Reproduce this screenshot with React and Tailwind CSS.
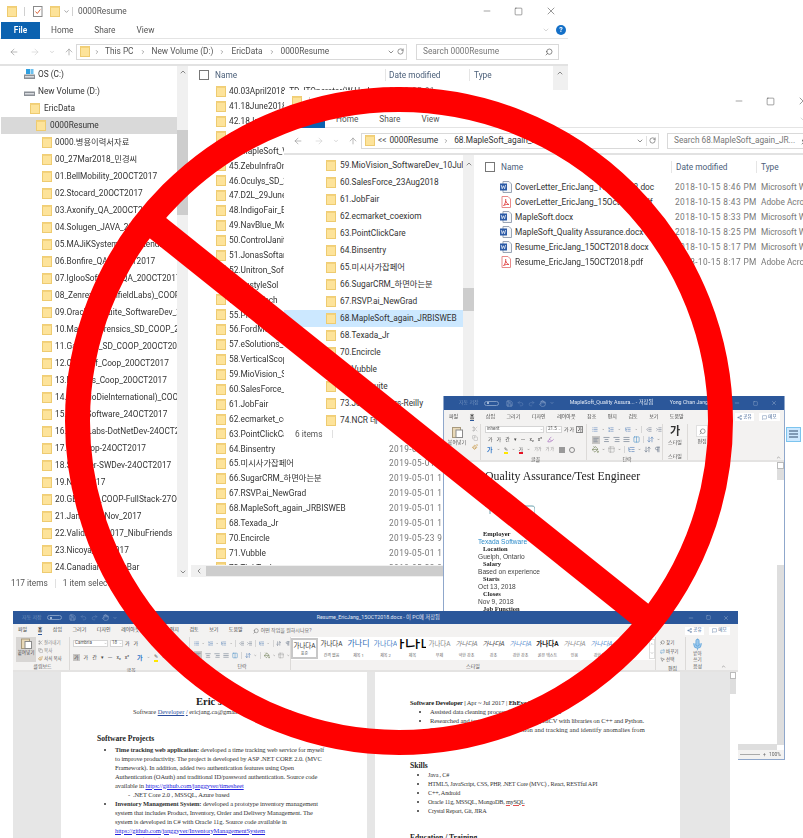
import { ArrowLeft, ArrowRight, ArrowUp, ChevronDown, ChevronUp, ChevronLeft, ChevronRight, RotateCw, Search, Minus, Square, X, Scissors, Copy, Paintbrush, List, ListOrdered, ListTree, AlignLeft, AlignCenter, AlignRight, AlignJustify, Columns2, Indent, Outdent, Pilcrow, ArrowDownUp, Highlighter, Save, Undo2, Redo2, Hand, Share2, MessageSquare, Mic, MousePointer2, Repeat, PaintBucket, Table2 } from 'lucide-react'

const uiFont = "font-['Roboto','Noto_Sans_CJK_KR',sans-serif]"

const navFolders = [
  '0000.병용이력서자료', '00_27Mar2018_민경씨', '01.BellMobility_20OCT2017', '02.Stocard_20OCT2017',
  '03.Axonify_QA_20OCT2017', '04.Solugen_JAVA_20OCT2017', '05.MAJiKSystems_FrontendDev', '06.Bonfire_QA_20OCT2017',
  '07.IglooSoftware_QA_20OCT2017', '08_Zenrez(GreenfieldLabs)_COOP', '09.OracleNetSuite_SoftwareDev_20OCT',
  '10.MagnetForensics_SD_COOP_20OCT2017', '11.GasTank_SD_COOP_20OCT2017', '12.ChefSelf_Coop_20OCT2017',
  '13.Fixtures_Coop_20OCT2017', '14.(OntarioDieInternational)_COOP', '15.WaveSoftware_24OCT2017',
  '16.StackLabs-DotNetDev-24OCT2017', '17.Kik-Coop-24OCT2017', '18.Scanner-SWDev-24OCT2017', '19.NCR_2017',
  '20.GEOTAB_COOP-FullStack-27Oct2017', '21.January_1Nov_2017', '22.ValidicDec2017_NibuFriends',
  '23.Nicoya_Nov2017', '24.CanadianVersusBar',
]

const listFolders = [
  ['40.03April2018_TD_ITOperator(W.Hed', '2019-05-01'], ['41.18June2018_Qlik', '2019-05-01'], ['42.18June2018', '2019-05-01'],
  ['43.Kinaxis', '2019-05-01'], ['44.MapleSoft_V2', '2019-05-01'], ['45.ZebuInfraOne', '2019-05-01'], ['46.Oculys_SD_2018', '2019-05-01'],
  ['47.D2L_29June2018', '2019-05-01'], ['48.IndigoFair_Ecom', '2019-05-01'], ['49.NavBlue_Mobile', '2019-05-01'],
  ['50.ControlJanitor', '2019-05-01'], ['51.JonasSoftare', '2019-05-01'], ['52.Unitron_Software', '2019-05-01'],
  ['53.LustyleSol', '2019-05-01'], ['54.ArrayTech', '2019-05-01'], ['55.PlexTech', '2019-05-01'], ['56.FordMotor', '2019-05-01'],
  ['57.eSolutions_Group', '2019-05-01'], ['58.VerticalScope', '2019-05-01'], ['59.MioVision_SD', '2019-05-01'],
  ['60.SalesForce_23Aug', '2019-05-01'], ['61.JobFair', '2019-05-01'], ['62.ecmarket_coexiom', '2019-05-01'],
  ['63.PointClickCare', '2019-05-01 11:'], ['64.Binsentry', '2019-05-01 11:'], ['65.미시사가잡페어', '2019-05-01 11:'],
  ['66.SugarCRM_하면아는분', '2019-05-01 11:'], ['67.RSVP.ai_NewGrad', '2019-05-01 11:'], ['68.MapleSoft_again_JRBISWEB', '2019-05-01 11:'],
  ['68.Texada_Jr', '2019-05-01 11:'], ['70.Encircle', '2019-05-23 9:1'], ['71.Vubble', '2019-05-01 11:'], ['72.TinkTank', '2019-05-23 9:1'],
]

const sideFolders = [
  '59.MioVision_SoftwareDev_10July2018', '60.SalesForce_23Aug2018', '61.JobFair', '62.ecmarket_coexiom', '63.PointClickCare',
  '64.Binsentry', '65.미시사가잡페어', '66.SugarCRM_하면아는분', '67.RSVP.ai_NewGrad', '68.MapleSoft_again_JRBISWEB',
  '68.Texada_Jr', '70.Encircle', '71.Vubble', '72.Hootsuite', '73.JobsPartners-Reilly', '74.NCR 데',
]

const files = [
  ['word', 'CoverLetter_EricJang_15Oct2018.doc', '2018-10-15 8:46 PM', 'Microsoft W'],
  ['pdf', 'CoverLetter_EricJang_15Oct2018.pdf', '2018-10-15 8:43 PM', 'Adobe Acro'],
  ['word', 'MapleSoft.docx', '2018-10-15 8:33 PM', 'Microsoft W'],
  ['word', 'MapleSoft_Quality Assurance.docx', '2018-10-15 8:25 PM', 'Microsoft W'],
  ['word', 'Resume_EricJang_15OCT2018.docx', '2018-10-15 8:17 PM', 'Microsoft W'],
  ['pdf', 'Resume_EricJang_15OCT2018.pdf', '2018-10-15 8:17 PM', 'Adobe Acro'],
]

const jobFields = [
  ['Employer', 'Texada Software'], ['Location', 'Guelph, Ontario'], ['Salary', 'Based on experience'],
  ['Starts', 'Oct 13, 2018'], ['Closes', 'Nov 9, 2018'], ['Job Function', ''],
]

const wordTabs = ['파일', '홈', '삽입', '그리기', '디자인', '레이아웃', '참조', '편지', '검토', '보기', '도움말']

const styleTiles = [
  ['가나다A', '표준', 'text-[#333]'], ['가나다A', '간격 없음', 'text-[#333]'], ['가나디', '제목 1', 'text-[#2f6eb5] text-[8px]'],
  ['가나다A', '제목 2', 'text-[#4a86c8] text-[7px]'], ['가나다', '제목', 'text-black text-[17px]'], ['가나다A', '부제', 'text-[#888]'],
  ['가나다A', '약한 강조', 'italic text-[#777]'], ['가나다A', '강조', 'italic text-[#444]'], ['가나다A', '강한 강조', 'italic text-[#5b8fd0]'],
  ['가나다A', '굵은 텍스트', 'font-bold text-[#222]'], ['가나다A', '인용', 'italic text-[#888]'], ['가나다A', '강한 인용', 'italic text-[#5b8fd0]'],
]

function Folder() {
  return (
    <svg width="10" height="11" viewBox="0 0 10 11" className="shrink-0">
      <rect x="0.5" y="0.5" width="9" height="10" fill="#fde39a" stroke="#eecb70" />
      <rect x="0.5" y="0.5" width="9" height="1.5" fill="#f3d27c" />
    </svg>
  )
}

function Drive({ os }) {
  return (
    <svg width="11" height="11" viewBox="0 0 11 11" className="shrink-0">
      {os && <rect x="2" y="0" width="4" height="5" fill="#2f9fe0" />}
      {os && <rect x="6.5" y="0" width="3" height="5" fill="#6cc0ee" />}
      <rect x="0" y="5.5" width="11" height="4.5" fill="#8a8f96" />
      <rect x="1" y="7" width="9" height="1.5" fill="#d9dce0" />
    </svg>
  )
}

function DocIcon({ kind }) {
  if (kind === 'pdf') {
    return (
      <svg width="12" height="12" viewBox="0 0 12 12" className="shrink-0">
        <path d="M2 .5h6l2.5 2.5v8.500h-8.500z" fill="#fff" stroke="#e88a8a" />
        <path d="M3.500 9.500c1.500-1 2.500-4 2.200-6.500M3.500 9.500c2-1 4.500-1.500 5.500-1M5.700 5c.5 1.500 1.500 2.800 3 3.500" fill="none" stroke="#e03b3b" strokeWidth="0.9" />
      </svg>
    )
  }
  return (
    <svg width="12" height="12" viewBox="0 0 12 12" className="shrink-0">
      <path d="M3 .5h6l2.500 2.500v8.500h-8.500z" fill="#f4f6f9" stroke="#9aa5b5" />
      <rect x="0" y="2.500" width="7" height="7" fill="#2b5aa6" />
      <path d="M1.200 4l1 3.800 1.200-3 1.200 3 1-3.800" fill="none" stroke="#fff" strokeWidth="0.7" />
    </svg>
  )
}

function WinControls({ wide }) {
  return (
    <div className={`ml-auto flex items-center gap-[22px] ${wide ? 'pr-[5px]' : ''}`}>
      <Minus size={10} strokeWidth={1.2} color="#444" />
      <Square size={9} strokeWidth={1.2} color="#333" />
      <X size={12} strokeWidth={1} color="#333" />
    </div>
  )
}

function AddressNav() {
  return (
    <div className="flex items-center gap-[9px] text-[#8a8a8a]">
      <ArrowLeft size={10} strokeWidth={1.4} />
      <ArrowRight size={10} strokeWidth={1.4} className="ml-[2px] text-[#ccc]" />
      <ChevronDown size={6} strokeWidth={1.4} />
      <ArrowUp size={10} strokeWidth={1.4} />
    </div>
  )
}

function ExplorerA() {
  return (
    <div className={`absolute left-0 top-0 h-[590px] w-[568px] bg-white text-[8.300px] text-[#333] blur-[0.4px] ${uiFont}`}>
      <div className="flex h-[22px] items-center pl-[7px] pr-[11px]">
        <Folder />
        <div className="ml-[7px] mr-[8px] h-[9px] w-px bg-[#d0d0d0]" />
        <svg width="10" height="11" viewBox="0 0 10 11"><rect x="0.5" y="0.5" width="8.500" height="10" fill="#fff" stroke="#8a8a8a" /><path d="M2.500 5.500l1.800 2 3-4" fill="none" stroke="#d9643a" strokeWidth="1" /></svg>
        <div className="ml-[7px]"><Folder /></div>
        <ChevronDown size={7} strokeWidth={1.6} className="ml-[3px] text-[#444]" />
        <div className="ml-[2px] h-[9px] w-px bg-[#d0d0d0]" />
        <span className="ml-[5px] text-[#555]">0000Resume</span>
        <WinControls />
      </div>
      <div className="flex h-[17px] items-center border-b border-[#e4e4e4]">
        <div className="ml-px flex h-[17px] w-[39px] items-center justify-center bg-[#0b62b0] font-semibold text-white">File</div>
        <span className="ml-[11px] text-[#555]">Home</span>
        <span className="ml-[21px] text-[#555]">Share</span>
        <span className="ml-[21px] text-[#555]">View</span>
        <ChevronDown size={8} strokeWidth={1.2} className="ml-auto text-[#999]" />
        <div className="ml-[6px] mr-[2px] flex h-[10px] w-[10px] items-center justify-center rounded-full bg-[#1470c8] text-[7px] font-bold text-white">?</div>
      </div>
      <div className="flex h-[27px] items-center border-b-2 border-[#e2e2e2] pl-[9px]">
        <AddressNav />
        <div className="ml-[2px] flex h-[16px] w-[331px] items-center border border-[#d9d9d9] pl-[3px] text-[#555]">
          <Folder />
          <ChevronRight size={6} className="ml-[4px]" />
          <span className="ml-[5px]">This PC</span>
          <ChevronRight size={6} className="ml-[6px]" />
          <span className="ml-[6px]">New Volume (D:)</span>
          <ChevronRight size={6} className="ml-[6px]" />
          <span className="ml-[6px]">EricData</span>
          <ChevronRight size={6} className="ml-[6px]" />
          <span className="ml-[6px]">0000Resume</span>
          <ChevronDown size={8} className="ml-auto mr-[2px]" />
          <RotateCw size={7} className="mr-[2px]" />
        </div>
        <div className="ml-[9px] flex h-[16px] w-[143px] items-center justify-between border border-[#d9d9d9] pl-[6px] pr-[5px] text-[#777]">
          <span>Search 0000Resume</span>
          <Search size={8} className="scale-x-[-1] text-[#555]" />
        </div>
      </div>
      <div className="flex h-[511px]">
        <div className="flex w-[177px] flex-col overflow-hidden whitespace-nowrap">
          <div className="flex h-[17px] shrink-0 items-center gap-[3px] pl-[24px]"><Drive os /><span>OS (C:)</span></div>
          <div className="flex h-[17px] shrink-0 items-center gap-[3px] pl-[24px]"><Drive /><span>New Volume (D:)</span></div>
          <div className="flex h-[17px] shrink-0 items-center gap-[4px] pl-[30px]"><Folder /><span>EricData</span></div>
          <div className="ml-px flex h-[17px] shrink-0 items-center gap-[4px] bg-[#d9d9d9] pl-[35px]"><Folder /><span>0000Resume</span></div>
          {navFolders.map((name) => (
            <div key={name} className="flex h-[17px] shrink-0 items-center gap-[3px] pl-[42px]"><Folder /><span>{name}</span></div>
          ))}
        </div>
        <div className="flex w-[11px] flex-col bg-[#f0f0f0] text-[#555]">
          <ChevronUp size={8} strokeWidth={2} className="ml-[2px] mt-[2px]" />
          <div className="mt-[54px] h-[85px] bg-[#cdcdcd]" />
          <ChevronDown size={8} strokeWidth={2} className="mb-[1px] ml-[2px] mt-auto" />
        </div>
        <div className="flex w-[380px] flex-col pl-[3px]">
          <div className="flex min-h-0 flex-1">
            <div className="flex w-[362px] flex-col">
              <div className="flex h-[18px] shrink-0 items-center pl-[8px] text-[#4c607a]">
                <div className="h-[10px] w-[10px] border border-[#777]" />
                <span className="ml-[6px] w-[170px]">Name</span>
                <span className="w-[84px] border-l border-[#e5e5e5] pl-[3px]">Date modified</span>
                <span className="border-l border-[#e5e5e5] pl-[4px]">Type</span>
              </div>
              <div className="overflow-hidden whitespace-nowrap">
                {listFolders.map(([name, date]) => (
                  <div key={name} className="flex h-[14.9px] items-center pl-[25px]">
                    <Folder />
                    <span className="ml-[3px] w-[160px] shrink-0">{name}</span>
                    <span className="tracking-[0.4px] text-[#777]">{date}</span>
                  </div>
                ))}
              </div>
            </div>
            <div className="w-[15px] bg-[#f0f0f0] pl-[3px] pt-[3px]"><ChevronUp size={8} strokeWidth={2} className="text-[#555]" /></div>
          </div>
          <div className="flex h-[12px] shrink-0 items-center bg-[#f0f0f0] pl-[4px]">
            <ChevronLeft size={8} strokeWidth={2} className="text-[#555]" />
            <div className="ml-[3px] h-[10px] w-[300px] bg-[#cdcdcd]" />
          </div>
        </div>
      </div>
      <div className="flex h-[13px] items-center pl-[11px] text-[#555]">
        <span>117 items</span>
        <div className="mx-[7px] h-[9px] w-px bg-[#e0e0e0]" />
        <span>1 item selected</span>
      </div>
    </div>
  )
}

function ExplorerB() {
  return (
    <div className={`absolute left-[284px] top-[90px] h-[351px] w-[530px] bg-white text-[8.300px] text-[#333] blur-[0.4px] ${uiFont}`}>
      <div className="flex h-[21px] items-center pl-[8px] pt-[1px]">
        <Folder />
        <div className="ml-[7px] h-[9px] w-px bg-[#d0d0d0]" />
        <div className="ml-[7px] h-[8px] w-[8px] bg-[#e8e8e8]" />
        <WinControls wide />
      </div>
      <div className="flex h-[17px] items-center border-b border-[#e4e4e4]">
        <div className="flex h-[17px] w-[41px] items-center justify-center bg-[#0b62b0] font-semibold text-white">File</div>
        <span className="ml-[11px] text-[#555]">Home</span>
        <span className="ml-[21px] text-[#555]">Share</span>
        <span className="ml-[21px] text-[#555]">View</span>
        <ChevronDown size={8} strokeWidth={1.2} className="ml-[360px] text-[#999]" />
      </div>
      <div className="flex h-[27px] items-center border-b-2 border-[#e2e2e2] pl-[9px]">
        <AddressNav />
        <div className="ml-[3px] flex h-[16px] w-[298px] items-center border border-[#d9d9d9] pl-[3px] text-[#555]">
          <Folder />
          <span className="ml-[3px]">&lt;&lt;</span>
          <span className="ml-[3px] text-[#333]">0000Resume</span>
          <ChevronRight size={6} className="ml-[5px]" />
          <span className="ml-[5px] text-[#333]">68.MapleSoft_again_JRBISWEB</span>
          <ChevronDown size={8} className="ml-auto" />
          <div className="mx-[2px] h-[10px] w-px bg-[#e0e0e0]" />
          <RotateCw size={7} className="mr-[2px]" />
        </div>
        <div className="ml-[8px] flex h-[16px] w-[145px] items-center justify-between whitespace-nowrap border border-[#d9d9d9] pl-[6px] pr-[2px] text-[#777]">
          <span>Search 68.MapleSoft_again_JR...</span>
          <Search size={8} className="scale-x-[-1] text-[#555]" />
        </div>
      </div>
      <div className="flex h-[272px]">
        <div className="flex w-[179px] flex-col overflow-hidden whitespace-nowrap pt-[2px]">
          {sideFolders.map((name) => (
            <div key={name} className={`flex h-[17px] shrink-0 items-center gap-[4px] pl-[42px] ${name.startsWith('68.Maple') ? 'bg-[#cce8ff]' : ''}`}><Folder /><span>{name}</span></div>
          ))}
        </div>
        <div className="flex w-[11px] flex-col bg-[#f0f0f0] text-[#555]">
          <ChevronUp size={8} strokeWidth={2} className="ml-[2px] mt-[5px]" />
          <div className="mt-[120px] h-[23px] bg-[#cdcdcd]" />
        </div>
        <div className="flex flex-1 flex-col pl-[11px]">
          <div className="flex h-[23.500px] items-center text-[#4c607a]">
            <div className="h-[10px] w-[10px] border border-[#777]" />
            <span className="ml-[6px] w-[170px]">Name</span>
            <span className="w-[85px] border-l border-[#e5e5e5] pl-[4px]">Date modified</span>
            <span className="border-l border-[#e5e5e5] pl-[4px]">Type</span>
          </div>
          <div className="pt-[1px]">
            {files.map(([kind, name, date, type]) => (
              <div key={name} className="flex h-[15px] items-center whitespace-nowrap pl-[15px]">
                <DocIcon kind={kind} />
                <span className="ml-[3px] w-[160px] shrink-0">{name}</span>
                <span className="w-[86px] shrink-0 tracking-[0.4px] text-[#777]">{date}</span>
                <span className="text-[#777]">{type}</span>
              </div>
            ))}
          </div>
        </div>
      </div>
      <div className="flex h-[14px] items-center pl-[11px] text-[#555]">
        <span>6 items</span>
        <div className="ml-[10px] h-[8px] w-px bg-[#e0e0e0]" />
        <div className="ml-[453px] flex h-[15px] w-[15px] flex-col justify-center gap-[1px] border border-[#7cc4ee] bg-[#cce8ff] px-[2px]">
          <div className="h-[2px] bg-[#7f9ab5]" />
          <div className="h-[2px] bg-[#7f9ab5]" />
          <div className="h-[2px] bg-[#7f9ab5]" />
        </div>
      </div>
    </div>
  )
}

function QuickAccess() {
  return (
    <div className="flex items-center gap-[4px] whitespace-nowrap text-[#c5d4e8]">
      <span className="text-[5px] text-[#6f8fbd]">자동 저장</span>
      <div className="ml-[1px] flex h-[5px] w-[15px] items-center rounded-full border border-[#7d9ac4] pl-[2px]"><div className="h-[2px] w-[2px] rounded-full bg-[#c5d4e8]" /></div>
      <Save size={7} strokeWidth={1.2} className="ml-[3px]" />
      <Undo2 size={7} strokeWidth={1.2} className="text-[#7d9ac4]" />
      <Redo2 size={7} strokeWidth={1.2} className="text-[#7d9ac4]" />
      <Hand size={7} strokeWidth={1.2} />
      <ChevronDown size={4} />
    </div>
  )
}

function WordControls({ gap }) {
  return (
    <div className={`flex items-center text-[#dfe7f3] ${gap}`}>
      <Minus size={6} strokeWidth={1.2} />
      <Square size={5} strokeWidth={1.2} />
      <X size={6} strokeWidth={1.2} />
    </div>
  )
}

function SharePair() {
  return (
    <div className="ml-auto flex items-center gap-[5px]">
      <div className="flex h-[8px] w-[19px] items-center justify-center gap-px bg-white text-[#4a6a9a]"><Share2 size={5} /><span className="text-[4.500px]">공유</span></div>
      <div className="flex h-[8px] w-[21px] items-center justify-center gap-px bg-white text-[#4a6a9a]"><MessageSquare size={5} /><span className="text-[4.500px]">메모</span></div>
    </div>
  )
}

function Letters({ items, gap = 'gap-[4px]' }) {
  return (
    <div className={`flex items-center ${gap} text-[5px] text-[#444]`}>
      {items.map((item, i) => <span key={i}>{item}</span>)}
    </div>
  )
}

function Sep() {
  return <div className="h-[7px] w-px bg-[#d5d5d5]" />
}

function ParaRows() {
  const c = '#5b6b80'
  return (
    <>
      <div className="flex h-[7px] items-center gap-[4px]">
        <List size={7} color="#4a78b5" /><ChevronDown size={3} /><ListOrdered size={7} color="#4a78b5" /><ChevronDown size={3} /><ListTree size={7} color="#4a78b5" /><ChevronDown size={3} />
        <Sep /><Outdent size={7} color={c} /><Indent size={7} color={c} />
      </div>
      <div className="flex h-[7px] items-center gap-[3px]">
        <div className="bg-[#c8c6c4] p-px"><AlignLeft size={6} color={c} /></div>
        <AlignCenter size={7} color={c} /><AlignRight size={7} color={c} /><AlignJustify size={7} color={c} /><Columns2 size={7} color="#4a90c8" />
        <Sep /><ArrowDownUp size={7} color="#4a78b5" /><ChevronDown size={3} />
      </div>
      <div className="flex h-[7px] items-center gap-[3px]">
        <PaintBucket size={7} color="#6a7a50" /><ChevronDown size={3} /><Table2 size={7} color="#aaa" /><ChevronDown size={3} />
        <Sep /><ListTree size={7} color="#4a78b5" /><ChevronDown size={3} /><ArrowDownUp size={7} color={c} /><Pilcrow size={7} color={c} />
      </div>
    </>
  )
}

function ParaRowsWide() {
  const c = '#5b6b80'
  return (
    <>
      <div className="flex h-[8px] items-center gap-[3px]">
        <List size={7} color="#4a78b5" /><ChevronDown size={3} /><ListOrdered size={7} color="#4a78b5" /><ChevronDown size={3} /><ListTree size={7} color="#4a78b5" /><ChevronDown size={3} />
        <Sep /><Outdent size={7} color={c} /><Indent size={7} color={c} /><Sep /><ListTree size={7} color="#4a78b5" /><ChevronDown size={3} /><Sep /><ArrowDownUp size={7} color={c} /><Pilcrow size={7} color={c} />
      </div>
      <div className="flex h-[8px] items-center gap-[3px]">
        <div className="bg-[#c8c6c4] p-px"><AlignLeft size={6} color={c} /></div>
        <AlignCenter size={7} color={c} /><AlignRight size={7} color={c} /><AlignJustify size={7} color={c} /><Columns2 size={7} color="#4a90c8" />
        <Sep /><ArrowDownUp size={7} color="#4a78b5" /><ChevronDown size={3} /><Sep /><PaintBucket size={7} color="#6a7a50" /><ChevronDown size={3} /><Table2 size={7} color="#aaa" /><ChevronDown size={3} />
      </div>
    </>
  )
}

function GroupLabel({ children }) {
  return <div className="mt-auto pb-[1px] text-center text-[5px] leading-[6px] text-[#555]">{children}</div>
}

function WordQuality() {
  return (
    <div className={`absolute left-[443px] top-[396px] flex h-[364px] w-[342px] flex-col border-x border-b border-[#8fa7cb] bg-white ${uiFont} blur-[0.4px]`}>
      <div className="flex h-[14px] shrink-0 items-center whitespace-nowrap bg-[#2b579a] pl-[15px] pr-[7px] text-[5.300px] text-[#e3eaf5]">
        <QuickAccess />
        <span className="ml-[16px] w-[100px]">MapleSoft_Quality Assura... - 저장됨</span>
        <span>Yong Chan Jang</span>
        <div className="ml-auto"><WordControls gap="gap-[13px]" /></div>
      </div>
      <div className="flex h-[14px] shrink-0 items-center bg-[#f3f2f1] pl-[5px] pr-[4px] text-[5px] text-[#444]">
        <div className="flex gap-[11.500px]">
          {wordTabs.map((t) => (
            <span key={t} className={t === '홈' ? 'border-b border-[#2b579a] font-semibold' : ''}>{t}</span>
          ))}
        </div>
        <SharePair />
      </div>
      <div className="flex h-[38px] shrink-0 border-b-2 border-[#e4e3e2] bg-[#f3f2f1]">
        <div className="flex w-[37px] shrink-0 flex-col border-r border-[#dcdad8]">
          <div className="flex">
            <div className="flex w-[26px] flex-col items-center pt-[2px]">
              <svg width="11" height="12" viewBox="0 0 11 12"><rect x="0.5" y="1.500" width="8" height="10" fill="#e9d9b8" stroke="#a8997c" /><rect x="4" y="4" width="6.500" height="7.500" fill="#fff" stroke="#8a8a8a" /></svg>
              <span className="text-[5px] leading-[8px] text-[#555]">붙여넣기</span>
            </div>
            <div className="flex flex-col gap-[3px] pl-[2px] pt-[2px]">
              <Scissors size={6} color="#aaa" /><Copy size={6} color="#aaa" /><Paintbrush size={6} color="#c08a2e" />
            </div>
          </div>
        </div>
        <div className="flex w-[106px] shrink-0 flex-col gap-[3px] border-r border-[#dcdad8] pl-[4px] pt-[2px]">
          <div className="flex h-[7px] items-center gap-[2px]">
            <div className="flex h-[7px] w-[59px] items-center justify-between border border-[#d5d5d5] bg-white pl-px text-[4.500px] text-[#555]">inherit<ChevronDown size={3} /></div>
            <div className="flex h-[7px] w-[16px] items-center justify-between border border-[#d5d5d5] bg-white pl-px text-[4.500px] text-[#555]">21.5<ChevronDown size={3} /></div>
            <Letters items={['가', '가']} gap="gap-px" />
            <div className="h-[7px] w-[7px] border border-[#888] text-center text-[4.500px] leading-[6px]">가</div>
          </div>
          <div className="flex h-[7px] items-center pl-[3px]"><Letters items={['가', '가', '간', '▾', 'ㅡ', 'x₂', 'x²']} gap="gap-[4px]" /><Highlighter size={7} color="#9b59b6" className="ml-[5px]" /></div>
          <div className="flex h-[7px] items-center gap-[4px] pl-[2px] text-[6px] font-bold">
            <span className="text-[#2e75c8]">가</span><ChevronDown size={3} />
            <span className="border-b-2 border-[#ffe600] text-[5px] font-normal leading-[6px] text-[#555]">✎</span><ChevronDown size={3} />
            <span className="border-b-2 border-[#e81123] text-[5px] font-normal leading-[6px] text-[#555]">가</span><ChevronDown size={3} />
            <span className="text-[4px] font-normal text-[#888]">가가</span>
            <span className="text-[4px] font-normal text-[#888]">가 가</span>
            <div className="ml-[1px] h-[6px] w-[6px] bg-[#999]" />
            <div className="h-[6px] w-[6px] rounded-full border border-[#888]" />
          </div>
          <GroupLabel>글꼴</GroupLabel>
        </div>
        <div className="flex w-[76px] shrink-0 flex-col gap-[3px] border-r border-[#dcdad8] pl-[5px] pt-[2px]">
          <ParaRows />
          <GroupLabel>단락</GroupLabel>
        </div>
        <div className="flex w-[25px] shrink-0 flex-col items-center border-r border-[#dcdad8] pt-[2px]">
          <span className="text-[11px] font-bold leading-[12px] text-[#333]">가</span>
          <span className="text-[5px] leading-[8px] text-[#555]">스타일</span>
          <GroupLabel>스타일</GroupLabel>
        </div>
        <div className="flex w-[28px] shrink-0 flex-col items-center pt-[1px]">
          <div className="flex h-[12px] w-[12px] items-center justify-center border border-[#e0e0e0] bg-white"><Search size={7} className="scale-x-[-1]" color="#666" /></div>
          <span className="text-[5px] leading-[9px] text-[#555]">편집</span>
        </div>
        <ChevronUp size={5} className="ml-auto mr-[3px] mt-auto text-[#555]" />
      </div>
      <div className="flex min-h-0 flex-1">
        <div className="flex-1 overflow-hidden pl-[41px] pt-[6px] font-['Liberation_Serif',serif] text-[#222]">
          <div className="text-[11.800px] leading-[16px]">Quality Assurance/Test Engineer</div>
          <svg width="50" height="9" viewBox="0 0 50 9" className="mt-[21px] block"><path d="M0 1h12M5 1v8M38 8V1h9c2 0 3 1 3 3v5" fill="none" stroke="#6aa0ad" strokeWidth="1" /></svg>
          <div className="-ml-[7px] mt-[16px] leading-[7.500px]">
            {jobFields.map(([label, value]) => (
              <div key={label}>
                <div className="pl-[5px] text-[6.500px] font-bold">{label}</div>
                {value && (
                  <div className={`font-['Liberation_Sans',sans-serif] text-[6.600px] ${label === 'Employer' ? 'text-[#2d8bc9]' : 'text-[#444]'}`}>{value}</div>
                )}
              </div>
            ))}
          </div>
        </div>
        <div className="flex w-[7px] shrink-0 flex-col bg-[#dedede]">
          <div className="h-[7px] border border-[#bbb] bg-white" />
          <div className="mt-[11px] h-[85px] bg-white" />
        </div>
      </div>
      <div className="flex h-[6px] shrink-0 items-center justify-end bg-[#dedede]">
        <div className="h-[5px] w-[7px] bg-white" />
      </div>
      <div className="flex h-[9px] shrink-0 items-center justify-end gap-[3px] bg-[#f3f2f1] pr-[3px] text-[5px] text-[#666]">
        <div className="h-px w-[20px] bg-[#aaa]" /><span>+</span><span>100%</span>
      </div>
    </div>
  )
}

function ResumeLeftPage() {
  return (
    <div className="ml-[48px] w-[306px] shrink-0 overflow-hidden whitespace-nowrap bg-white pl-[36px] text-[6.500px] leading-[9px] tracking-[-0.1px]">
      <div className="mt-[24px] pl-[99px] text-[10.500px] font-bold leading-[12px] tracking-normal text-[#222]">Eric Jang</div>
      <div className="pl-[36px] text-[6.400px] leading-[8px] tracking-normal">Software <span className="text-[#2a4c9c] underline">Developer</span> <span className="text-[#2a4c9c] underline">/</span> ericjang.ca@gmail.com / 519-555-0123</div>
      <div className="mt-[18px] text-[7.600px] font-bold leading-[10px] tracking-normal text-[#222]">Software Projects</div>
      <ul className="list-disc pl-[18px] pt-[0.500px]">
        <li><b>Time tracking web application:</b> developed a time tracking web service for myself</li>
        <li className="list-none">to improve productivity. The project is developed by ASP .NET CORE 2.0. (MVC</li>
        <li className="list-none">Framework). In addition, added two authentication features using Open</li>
        <li className="list-none">Authentication (OAuth) and traditional ID/password authentication. Source code</li>
        <li className="list-none">available in <span className="text-[#2222dd] underline">https://github.com/janggyver/timesheet</span></li>
        <li className="ml-[18px] list-['-__']">.NET Core 2.0 , MSSQL, Azure based</li>
        <li><b>Inventory Management System:</b> developed a prototype inventory management</li>
        <li className="list-none">system that includes Product, Inventory, Order and Delivery Management. The</li>
        <li className="list-none">system is developed in C# with Oracle 11g. Source code available in</li>
        <li className="list-none"><span className="text-[#2222dd] underline">https://github.com/janggyver/InventoryManagementSystem</span></li>
        <li className="ml-[18px] list-['-__']">C# (MVC), JavaScript, Oracle 11g based</li>
      </ul>
    </div>
  )
}

function ResumeRightPage() {
  return (
    <div className="ml-[8px] w-[305px] shrink-0 overflow-hidden whitespace-nowrap bg-white pl-[35px] text-[6.500px] leading-[9px] tracking-[-0.1px]">
      <div className="mt-[25.500px]"><b className="text-[#222]">Software Developer |</b> Apr ~ Jul 2017 | <b className="text-[#222]">EhEye Inc</b></div>
      <ul className="list-disc pl-[20px]">
        <li>Assisted data cleaning process for the ML algorithm</li>
        <li>Researched and tested object detection in OpenCV with libraries on C++ and Python.</li>
        <li className="list-none tracking-[0.07px]">The system performs motion detection and tracking and identify anomalies from</li>
      </ul>
      <div className="mt-[27px] text-[7.600px] font-bold leading-[9px] tracking-normal text-[#222]">Skills</div>
      <ul className="list-disc pl-[18px] text-[6.200px] tracking-[-0.2px]">
        <li>Java , C#</li>
        <li>HTML5, JavaScript, CSS, PHP, .NET Core (MVC) , React, RESTful API</li>
        <li>C++, Android</li>
        <li>Oracle 11g, MSSQL, MongoDB, <span className="underline decoration-[#e05050]">mySQL</span></li>
        <li>Crystal Report, Git, JIRA</li>
      </ul>
      <div className="mt-[18px] text-[7.600px] font-bold leading-[9px] tracking-normal text-[#222]">Education / Training</div>
    </div>
  )
}

function WordResume() {
  return (
    <div className={`absolute left-[13px] top-[611px] flex h-[227px] w-[725px] flex-col bg-white ${uiFont} blur-[0.4px]`}>
      <div className="flex h-[13px] shrink-0 items-center whitespace-nowrap bg-[#2b579a] px-[9px] text-[5.300px] text-[#e3eaf5]">
        <QuickAccess />
        <span className="ml-[200px]">Resume_EricJang_15OCT2018.docx - 이 PC에 저장됨</span>
        <div className="ml-auto"><WordControls gap="gap-[12px]" /></div>
      </div>
      <div className="flex h-[13px] shrink-0 items-center bg-[#f3f2f1] pl-[5px] pr-[8px] text-[5px] text-[#444]">
        <div className="flex gap-[10.500px]">
          {wordTabs.map((t) => (
            <span key={t} className={t === '홈' ? 'border-b border-[#2b579a] font-semibold' : ''}>{t}</span>
          ))}
        </div>
        <Search size={6} className="ml-[10px] scale-x-[-1]" color="#666" />
        <span className="ml-[2px] text-[#666]">어떤 작업을 원하시나요?</span>
        <SharePair />
      </div>
      <div className="flex h-[35px] shrink-0 border-b-2 border-[#e4e3e2] bg-[#f3f2f1]">
        <div className="flex w-[57px] shrink-0 flex-col border-r border-[#dcdad8] pl-[3px]">
          <div className="flex">
            <div className="flex h-[25px] w-[20px] flex-col items-center bg-[#d8d6d4] pt-[1px]">
              <svg width="11" height="11" viewBox="0 0 11 11"><rect x="0.5" y="1" width="8" height="9.500" fill="#e9d9b8" stroke="#a8997c" /><rect x="4" y="3.500" width="6.500" height="7" fill="#fff" stroke="#8a8a8a" /></svg>
              <span className="text-[4.500px] leading-[7px] text-[#444]">붙여넣기</span>
            </div>
            <div className="flex flex-col gap-[1px] pl-[2px] pt-[2px] text-[4.500px] leading-[7px] text-[#888]">
              <div className="flex items-center gap-px"><Scissors size={5} />잘라내기</div>
              <div className="flex items-center gap-px"><Copy size={5} />복사</div>
              <div className="flex items-center gap-px text-[#555]"><Paintbrush size={5} color="#c08a2e" />서식 복사</div>
            </div>
          </div>
          <GroupLabel>클립보드</GroupLabel>
        </div>
        <div className="flex w-[120px] shrink-0 flex-col gap-[5px] border-r border-[#dcdad8] pl-[3px] pt-[3px]">
          <div className="flex items-center gap-[2px]">
            <div className="flex h-[7px] w-[35px] items-center justify-between border border-[#d5d5d5] bg-white pl-px text-[4.500px] text-[#555]">Cambria<ChevronDown size={3} /></div>
            <div className="flex h-[7px] w-[13px] items-center justify-between border border-[#d5d5d5] bg-white pl-px text-[4.500px] text-[#555]">18<ChevronDown size={3} /></div>
            <Letters items={['가', '가']} />
          </div>
          <div className="flex items-center gap-[4px] text-[5px] text-[#444]">
            <span className="bg-[#c8c6c4] px-px">가</span><span>가</span><span>간</span><span>▾</span><span>ㅡ</span><span>x₂</span><span>x²</span>
            <span className="ml-[4px] text-[6px] font-bold text-[#2e75c8]">가</span><ChevronDown size={3} />
            <span className="border-b-2 border-[#ffe600] text-[#555]">✎</span><ChevronDown size={3} />
          </div>
          <GroupLabel>글꼴</GroupLabel>
        </div>
        <div className="flex w-[101px] shrink-0 flex-col gap-[4px] border-r border-[#dcdad8] pl-[4px] pt-[3px]">
          <ParaRowsWide />
          <GroupLabel>단락</GroupLabel>
        </div>
        <div className="flex w-[365px] shrink-0 flex-col border-r border-[#dcdad8]">
          <div className="flex h-[23px] items-center bg-white">
            {styleTiles.map(([sample, label, tone], i) => (
              <div key={label} className={`flex h-[21px] w-[27px] shrink-0 flex-col items-center justify-between overflow-hidden whitespace-nowrap pt-[1px] ${i === 0 ? 'border-2 border-[#c8c8c8]' : ''}`}>
                <span className={`block h-[10px] overflow-hidden text-[6.500px] leading-[10px] ${tone}`}>{sample}</span>
                <span className="text-[4px] leading-[6px] text-[#666]">{label}</span>
              </div>
            ))}
            <div className="ml-auto flex h-[20px] w-[6px] flex-col items-center justify-around border border-[#ddd] text-[#666]">
              <ChevronUp size={4} /><ChevronDown size={4} />
            </div>
          </div>
          <GroupLabel>스타일</GroupLabel>
        </div>
        <div className="flex w-[30px] shrink-0 flex-col gap-[1px] border-r border-[#dcdad8] pl-[4px] pt-[2px] text-[4.500px] leading-[7.500px] text-[#555]">
          <div className="flex items-center gap-px"><Search size={5} className="scale-x-[-1]" />찾기</div>
          <div className="flex items-center gap-px"><Repeat size={5} color="#4a90c8" />바꾸기</div>
          <div className="flex items-center gap-px"><MousePointer2 size={5} />선택</div>
          <GroupLabel>편집</GroupLabel>
        </div>
        <div className="flex w-[23px] shrink-0 flex-col items-center pt-[1px]">
          <Mic size={13} strokeWidth={1} color="#3a8fd0" fill="#9cc8ec" />
          <span className="w-[10px] text-center text-[4.500px] leading-[6px] text-[#555]">받아 쓰기</span>
          <GroupLabel>음성</GroupLabel>
        </div>
        <ChevronUp size={5} className="mb-[1px] ml-[12px] mt-auto text-[#555]" />
      </div>
      <div className="flex min-h-0 flex-1 bg-[#e6e6e6] font-['Liberation_Serif',serif] text-[#333]">
        <ResumeLeftPage />
        <ResumeRightPage />
        <div className="ml-[50px] w-[6px] bg-[#dedede]">
          <div className="h-[7px] border border-[#bbb] bg-white" />
          <div className="mt-[15px] h-[200px] bg-white" />
        </div>
        <div className="w-[2px] bg-white" />
      </div>
    </div>
  )
}

export default function App() {
  return (
    <div className="relative h-[838px] w-[803px] overflow-hidden bg-white">
      <ExplorerA />
      <ExplorerB />
      <WordQuality />
      <WordResume />
      {/* prohibition sign lies over all the windows */}
      <svg width="803" height="838" viewBox="0 0 803 838" className="pointer-events-none absolute left-0 top-0">
        <circle cx="399" cy="421" r="321.500" fill="none" stroke="#ff0000" strokeWidth="25" />
        <line x1="149" y1="221" x2="649" y2="621" stroke="#ff0000" strokeWidth="26" />
      </svg>
    </div>
  )
}
